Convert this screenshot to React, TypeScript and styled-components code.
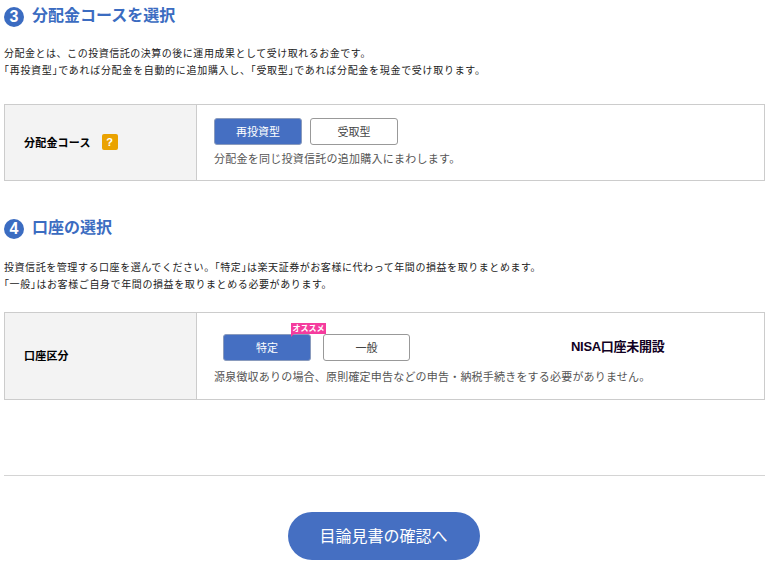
import React from "react";
import styled, { createGlobalStyle } from "styled-components";

const Global = createGlobalStyle`
  html, body { margin: 0; padding: 0; background: #fff; }
  body { font-family: "Liberation Sans", "Noto Sans CJK JP", sans-serif; color: #333; }
`;

const Page = styled.div`
  width: 761px;
  height: 566px;
  margin-left: 4px;
  overflow: hidden;
`;

const Section = styled.section<{ $gap: number }>`
  padding-top: ${(p) => p.$gap}px;
`;

const Heading = styled.h2`
  display: flex;
  align-items: center;
  gap: 8px;
  height: 21px;
  margin: 0;
  color: #3b6cc1;
  font-size: 16px;
  font-weight: 700;
  line-height: 21px;
`;

const StepNo = styled.span`
  flex: none;
  width: 20px;
  height: 20px;
  margin-top: 2px;
  border-radius: 50%;
  background: #3b6cc1;
  color: #fff;
  font-family: "Liberation Sans", sans-serif;
  font-size: 16px;
  font-weight: 700;
  line-height: 20px;
  text-align: center;
`;

const Lead = styled.div<{ $mt: number }>`
  margin: ${(p) => p.$mt}px 0 0;
  color: #222;
  font-size: 10px;
  line-height: 17px;
`;

const LeadLine = styled.p<{ $ls: number }>`
  margin: 0;
  letter-spacing: ${(p) => p.$ls}px;
`;

const Kagi = styled.span`
  font-feature-settings: "halt";
`;

const Panel = styled.div<{ $height: number; $mt: number }>`
  display: grid;
  grid-template-columns: 192px 1fr;
  height: ${(p) => p.$height}px;
  margin-top: ${(p) => p.$mt}px;
  border: 1px solid #ccc;
  box-sizing: border-box;
`;

const Label = styled.div<{ $lift: number }>`
  display: flex;
  align-items: center;
  gap: 11px;
  padding: 0 0 ${(p) => p.$lift}px 19px;
  background: #f3f3f3;
  border-right: 1px solid #ccc;
  color: #000;
  font-size: 11px;
  font-weight: 700;
  letter-spacing: 0.2px;
`;

const Help = styled.span`
  width: 16px;
  height: 16px;
  border-radius: 2px;
  background: #eaa200;
  color: #fff;
  font-size: 11px;
  font-weight: 700;
  line-height: 16px;
  text-align: center;
`;

const Body = styled.div<{ $top: number }>`
  padding: ${(p) => p.$top}px 0 0 17px;
`;

const Choices = styled.div<{ $indent?: number; $gap: number }>`
  display: flex;
  align-items: center;
  gap: ${(p) => p.$gap}px;
  padding-left: ${(p) => p.$indent ?? 0}px;
`;

const Choice = styled.button<{ $on?: boolean; $width?: number }>`
  position: relative;
  width: ${(p) => p.$width ?? 88}px;
  height: 27px;
  padding: 0 0 2px;
  border: 1px solid ${(p) => (p.$on ? "#8a9bbd" : "#999")};
  border-radius: 3px;
  background: ${(p) => (p.$on ? "#456fc2" : "#fff")};
  color: ${(p) => (p.$on ? "#fff" : "#444")};
  font-family: inherit;
  font-size: 11px;
`;

const Badge = styled.span`
  position: absolute;
  top: -12px;
  right: -16px;
  width: 35px;
  height: 11px;
  background: #f53c9e;
  color: #fff;
  font-size: 8px;
  font-weight: 700;
  line-height: 11px;
  text-align: center;
  &::after {
    content: "";
    position: absolute;
    left: 0;
    bottom: -3px;
    border-top: 3px solid #f53c9e;
    border-right: 3px solid transparent;
  }
`;

const Nisa = styled.span`
  margin-left: 149px;
  padding-bottom: 4px;
  color: #110022;
  font-size: 13px;
  font-weight: 700;
  letter-spacing: -0.3px;
`;

const Note = styled.p<{ $mt: number; $ls: number }>`
  margin: ${(p) => p.$mt}px 0 0;
  color: #555;
  font-size: 11px;
  line-height: 16px;
  letter-spacing: ${(p) => p.$ls}px;
`;

const Rule = styled.hr`
  margin: 75px 0 0;
  border: 0;
  border-top: 1px solid #d4d4d4;
`;

const Footer = styled.div`
  display: flex;
  justify-content: center;
  padding: 36px 1px 0 0;
`;

const Next = styled.button`
  width: 192px;
  height: 48px;
  padding: 0 1px 3px 0;
  border: 0;
  border-radius: 24px;
  background: #456fc2;
  color: #fff;
  font-family: inherit;
  font-size: 16px;
`;

export default function App() {
  return (
    <Page>
      <Global />
      <Section $gap={5}>
        <Heading><StepNo>3</StepNo>分配金コースを選択</Heading>
        <Lead $mt={19}>
          <LeadLine $ls={0.52}>分配金とは、この投資信託の決算の後に運用成果として受け取れるお金です。</LeadLine>
          <LeadLine $ls={0.7}><Kagi>「</Kagi>再投資型<Kagi>」</Kagi>であれば分配金を自動的に追加購入し、<Kagi>「</Kagi>受取型<Kagi>」</Kagi>であれば分配金を現金で受け取ります。</LeadLine>
        </Lead>
        <Panel $height={77} $mt={25}>
          <Label $lift={1}>分配金コース<Help>?</Help></Label>
          <Body $top={13}>
            <Choices $gap={8}>
              <Choice $on>再投資型</Choice>
              <Choice>受取型</Choice>
            </Choices>
            <Note $mt={6} $ls={0.25}>分配金を同じ投資信託の追加購入にまわします。</Note>
          </Body>
        </Panel>
      </Section>
      <Section $gap={36}>
        <Heading><StepNo>4</StepNo>口座の選択</Heading>
        <Lead $mt={21}>
          <LeadLine $ls={0.56}>投資信託を管理する口座を選んでください。<Kagi>「</Kagi>特定<Kagi>」</Kagi>は楽天証券がお客様に代わって年間の損益を取りまとめます。</LeadLine>
          <LeadLine $ls={0.6}><Kagi>「</Kagi>一般<Kagi>」</Kagi>はお客様ご自身で年間の損益を取りまとめる必要があります。</LeadLine>
        </Lead>
        <Panel $height={88} $mt={19}>
          <Label $lift={3}>口座区分</Label>
          <Body $top={21}>
            <Choices $indent={9} $gap={12}>
              <Choice $on>特定<Badge>オススメ</Badge></Choice>
              <Choice $width={87}>一般</Choice>
              <Nisa>NISA口座未開設</Nisa>
            </Choices>
            <Note $mt={8} $ls={0.2}>源泉徴収ありの場合、原則確定申告などの申告・納税手続きをする必要がありません。</Note>
          </Body>
        </Panel>
      </Section>
      <Rule />
      <Footer>
        <Next>目論見書の確認へ</Next>
      </Footer>
    </Page>
  );
}
